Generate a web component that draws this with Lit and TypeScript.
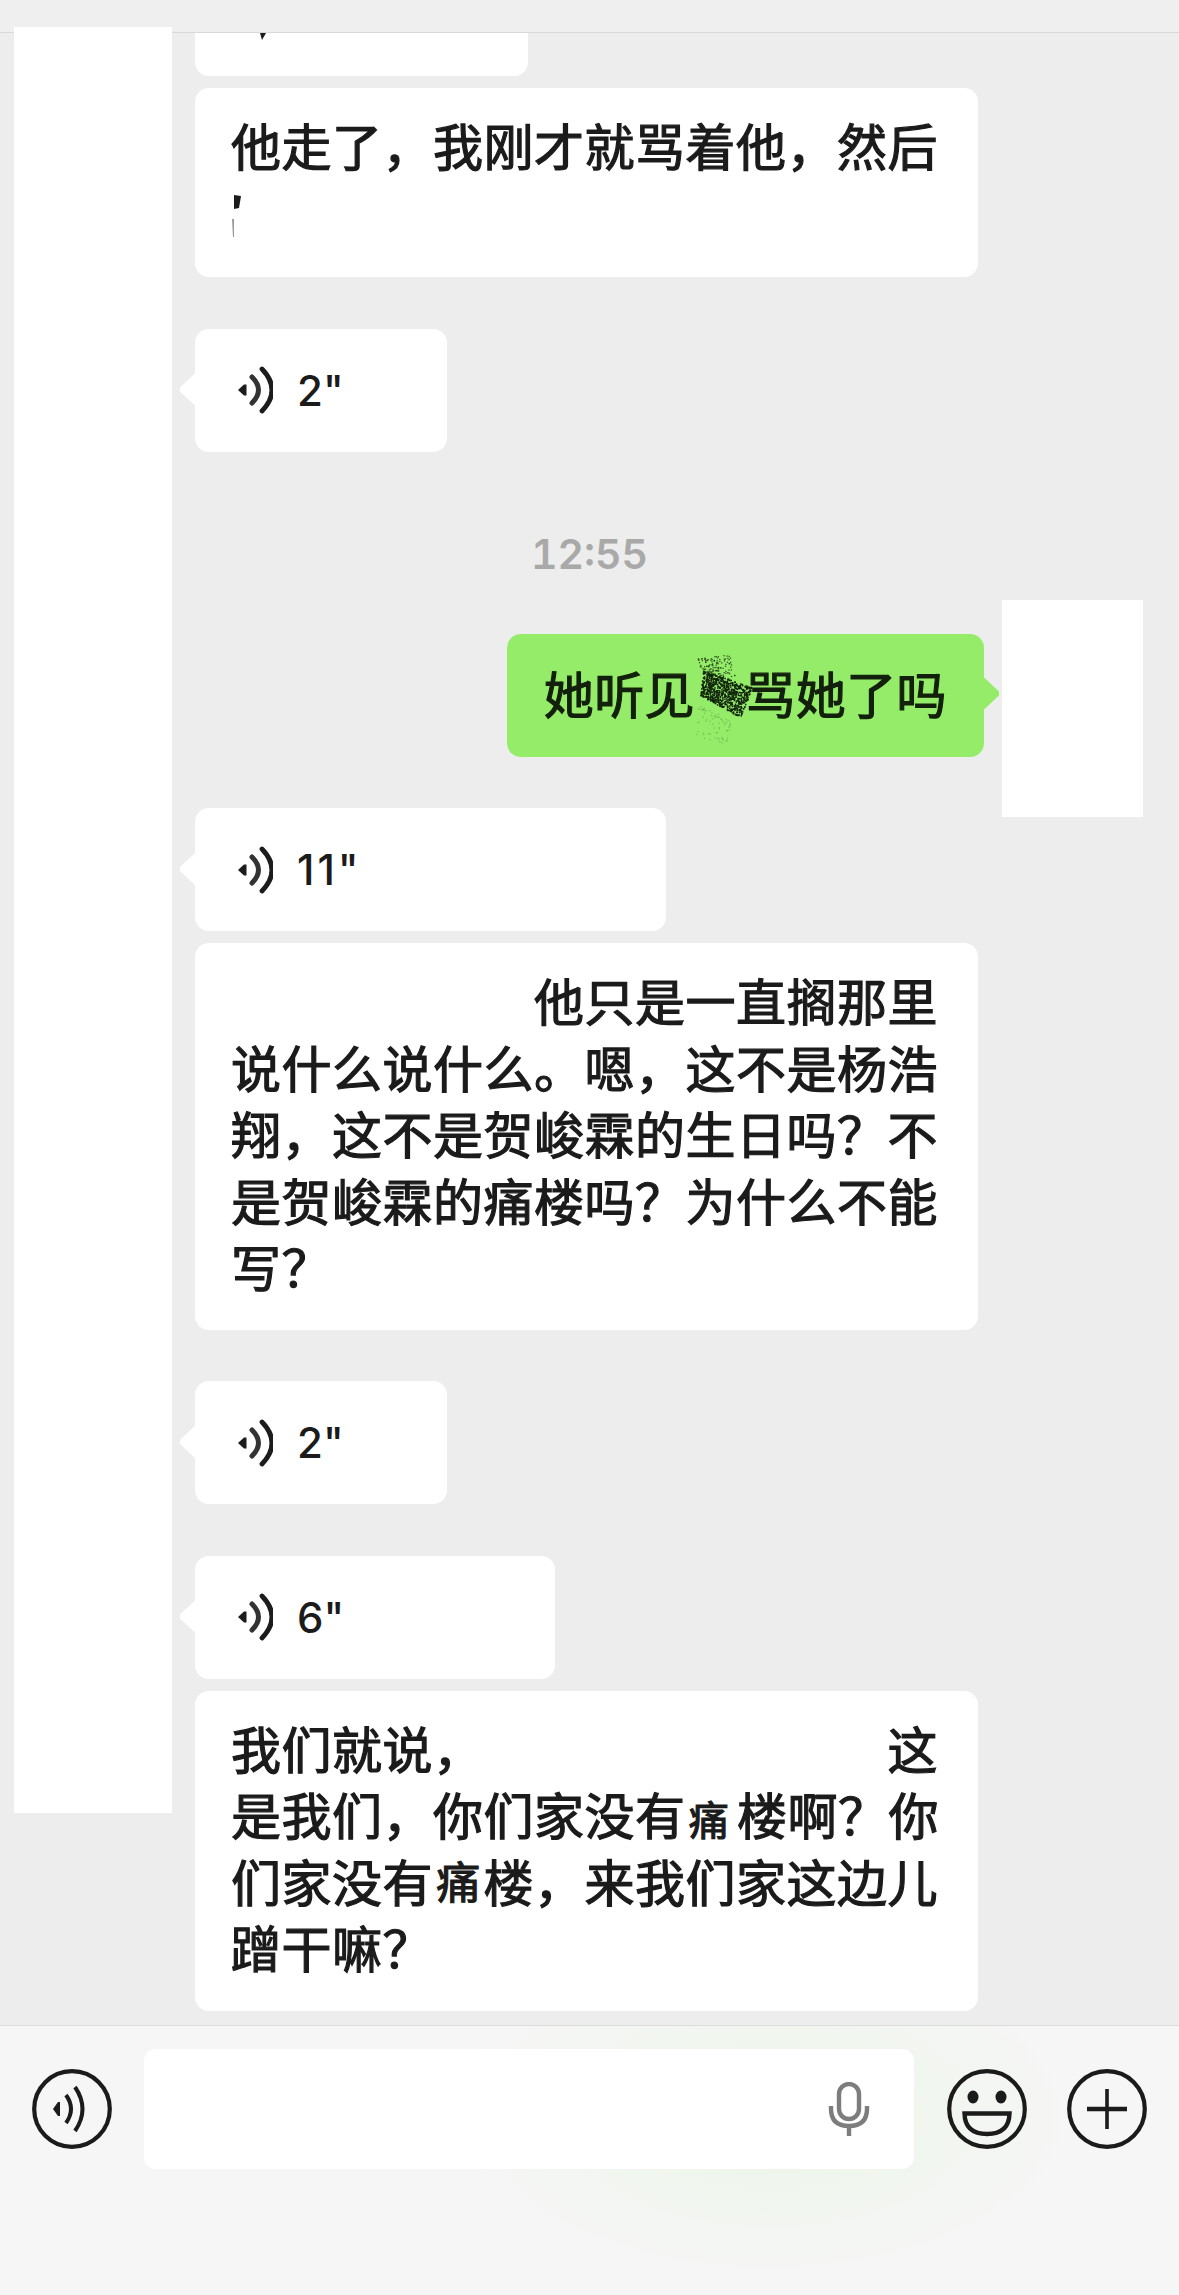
import { LitElement, html, css, svg } from "lit";
import { customElement } from "lit/decorators.js";

// small seeded generator so the scribble stays the same between runs
function makeRandom(seed: number) {
  let s = seed;
  return () => {
    s = (s * 1664525 + 1013904223) % 4294967296;
    return s / 4294967296;
  };
}

type Pt = [number, number];

function quadDots(rand: () => number, q: Pt[], count: number) {
  const out: Pt[] = [];
  for (let i = 0; i < count; i++) {
    const u = rand();
    const v = rand();
    const ax = q[0][0] + (q[1][0] - q[0][0]) * u;
    const ay = q[0][1] + (q[1][1] - q[0][1]) * u;
    const bx = q[3][0] + (q[2][0] - q[3][0]) * u;
    const by = q[3][1] + (q[2][1] - q[3][1]) * u;
    out.push([ax + (bx - ax) * v, ay + (by - ay) * v]);
  }
  return out;
}

const rand = makeRandom(47);
const denseDots = quadDots(rand, [[13, 18], [62, 35], [50, 65], [10, 43]], 760);
const topDots = quadDots(rand, [[7, 6], [40, 2], [46, 24], [10, 24]], 130);
const lowDots = quadDots(rand, [[8, 52], [40, 66], [40, 92], [6, 86]], 70);

const voiceBubbles = { short: 252, six: 360, long: 471 };

const voiceGlyph = html`<svg class="wave" viewBox="0 0 36 48">
  <path d="M1 24 L7 18.5 L9.5 18.5 L9.5 29.5 L7 29.5Z" fill="#1c1c1c"></path>
  <path d="M15 11 Q28 24 15 37" fill="none" stroke="#333" stroke-width="5" stroke-linecap="round"></path>
  <path d="M25 3 Q45 24 25 45" fill="none" stroke="#1c1c1c" stroke-width="4.8" stroke-linecap="round"></path>
</svg>`;

@customElement("app-root")
export class AppRoot extends LitElement {
  static styles = css`
    :host {
      display: flex;
      flex-direction: column;
      position: relative;
      width: 1179px;
      height: 2295px;
      overflow: hidden;
      background: #ededed;
      color: #1b1b1b;
      font-family: "Noto Sans CJK SC", "Liberation Sans", sans-serif;
    }

    .top {
      height: 32px;
      flex: none;
      background: #efefef;
      border-bottom: 1px solid #d9d9d9;
    }

    .chat {
      flex: 1;
      min-height: 0;
      display: flex;
      flex-direction: column;
      align-items: flex-start;
      padding: 0 195px;
      overflow: hidden;
    }

    .bubble {
      position: relative;
      box-sizing: border-box;
      background: #fff;
      border-radius: 14px;
      flex: none;
    }

    .cut {
      width: 333px;
      height: 43px;
      border-radius: 0 0 14px 14px;
    }

    .cut svg {
      position: absolute;
      left: 62px;
      top: 0;
      width: 10px;
      height: 7px;
    }

    .text {
      width: 783px;
      padding: 23px 40px 31px 36px;
      font-size: 50px;
      line-height: 66.5px;
      letter-spacing: 0.5px;
      -webkit-text-stroke: 1.2px currentColor;
    }

    .line {
      white-space: nowrap;
      height: 66.5px;
    }

    .right {
      text-align: right;
    }

    .spread {
      display: flex;
      justify-content: space-between;
    }

    .scrap-line {
      display: flex;
      align-items: flex-start;
      height: 68.5px;
      padding-top: 17px;
      box-sizing: border-box;
    }

    .scrap {
      width: 14px;
      height: 46px;
    }

    .pasted {
      display: inline-block;
      width: 50.5px;
      text-align: center;
      letter-spacing: 0;
    }

    .pasted-a {
      font-size: 40px;
      margin-right: 3px;
      margin-left: -2px;
    }

    .pasted-b {
      font-size: 44px;
      position: relative;
      top: -3px;
    }

    .near {
      margin-top: 12px;
    }

    .far {
      margin-top: 51.5px;
    }

    .voice {
      height: 123px;
      display: flex;
      align-items: center;
      padding-left: 42px;
      gap: 24px;
      font-family: Inter, "Liberation Sans", sans-serif;
      font-size: 42px;
      font-weight: 500;
    }

    .wide {
      letter-spacing: 3px;
    }

    .voice::before {
      content: "";
      position: absolute;
      left: -15px;
      top: 44px;
      width: 16px;
      height: 34px;
      background: #fff;
      clip-path: polygon(0 44%, 0 56%, 100% 100%, 100% 0);
    }

    .wave {
      width: 36px;
      height: 48px;
      flex: none;
    }

    .time {
      align-self: stretch;
      margin: 76px 0 54px;
      text-align: center;
      font-family: Inter, "Liberation Sans", sans-serif;
      font-size: 41px;
      line-height: 52px;
      font-weight: 600;
      font-variant-numeric: tabular-nums;
      color: #a9a9a9;
    }

    .mine {
      align-self: flex-end;
      background: #95ec69;
      color: #12200c;
      padding: 25px 37px 31.5px;
      font-size: 50px;
      line-height: 66.5px;
      letter-spacing: 0.4px;
      -webkit-text-stroke: 1.2px currentColor;
      white-space: nowrap;
      display: flex;
    }

    .mine::after {
      content: "";
      position: absolute;
      right: -15px;
      top: 43px;
      width: 16px;
      height: 34px;
      background: #95ec69;
      clip-path: polygon(100% 44%, 100% 56%, 0 100%, 0 0);
    }

    .hole {
      position: relative;
      width: 50.4px;
      height: 66px;
      flex: none;
    }

    .blot {
      position: absolute;
      left: -5px;
      top: -7px;
      width: 70px;
      height: 95px;
      -webkit-text-stroke: 0;
    }

    .composer {
      flex: none;
      height: 270px;
      box-sizing: border-box;
      border-top: 1px solid #dcdcdc;
      display: flex;
      align-items: flex-start;
      padding: 23px 0 0 32px;
      background:
        radial-gradient(ellipse 320px 170px at 770px 90px, #ecf5e8 0%, rgba(236, 245, 232, 0) 100%),
        #f6f6f6;
    }

    .round {
      width: 80px;
      height: 80px;
      flex: none;
      margin-top: 20px;
    }

    .field {
      width: 770px;
      height: 120px;
      flex: none;
      box-sizing: border-box;
      margin: 0 33px 0 32px;
      background: #fff;
      border-radius: 12px;
      display: flex;
      justify-content: flex-end;
      align-items: center;
      padding-right: 44px;
    }

    .mic {
      width: 42px;
      height: 54px;
    }

    .plus {
      margin-left: 40px;
    }

    .mask {
      position: absolute;
      background: #fff;
    }

    .mask-left {
      left: 14px;
      top: 27px;
      width: 158px;
      height: 1786px;
    }

    .mask-right {
      left: 1002px;
      top: 600px;
      width: 141px;
      height: 217px;
    }
  `;

  renderVoice(label: string, width: number, gap: string) {
    return html`<div class="bubble voice ${gap}" style="width:${width}px">
      ${voiceGlyph}<span class=${label.length > 2 ? "wide" : ""}>${label}</span>
    </div>`;
  }

  renderBlot() {
    return html`<svg class="blot" viewBox="0 0 70 95">
      ${lowDots.map(
        ([x, y]) => svg`<rect x=${x} y=${y} width="1.2" height="1.2" fill="#3f8030" opacity="0.4"></rect>`
      )}
      ${topDots.map(
        ([x, y]) => svg`<rect x=${x} y=${y} width="1.3" height="1.3" fill="#1c3a14" opacity="0.8"></rect>`
      )}
      ${denseDots.map(
        ([x, y]) => svg`<rect x=${x} y=${y} width="1.5" height="1.5" fill="#11240c"></rect>`
      )}
    </svg>`;
  }

  render() {
    return html`
      <div class="top"></div>

      <div class="chat">
        <div class="bubble cut">
          <svg viewBox="0 0 10 7"><path d="M3 0H9L5 7Z" fill="#1b1b1b"></path></svg>
        </div>
        <div class="bubble text near">
          <div class="line">他走了，我刚才就骂着他，然后</div>
          <div class="line scrap-line">
            <svg class="scrap" viewBox="0 0 14 46">
              <path d="M3 0L10 1L8 13L3 14Z" fill="#1b1b1b"></path>
              <path d="M1 24H3V42H2Z" fill="#9a9a9a"></path>
            </svg>
          </div>
        </div>

        ${this.renderVoice('2"', voiceBubbles.short, "far")}

        <div class="time">12:55</div>

        <div class="bubble mine">
          <span>她听见</span>
          <span class="hole">${this.renderBlot()}</span>
          <span>骂她了吗</span>
        </div>

        ${this.renderVoice('11"', voiceBubbles.long, "far")}

        <div class="bubble text near">
          <div class="line right">他只是一直搁那里</div>
          <div class="line">说什么说什么。嗯，这不是杨浩</div>
          <div class="line">翔，这不是贺峻霖的生日吗？不</div>
          <div class="line">是贺峻霖的痛楼吗？为什么不能</div>
          <div class="line">写？</div>
        </div>

        ${this.renderVoice('2"', voiceBubbles.short, "far")}
        ${this.renderVoice('6"', voiceBubbles.six, "far")}

        <div class="bubble text near">
          <div class="line spread"><span>我们就说，</span><span>这</span></div>
          <div class="line">是我们，你们家没有<span class="pasted pasted-a">痛</span>楼啊？你</div>
          <div class="line">们家没有<span class="pasted pasted-b">痛</span>楼，来我们家这边儿</div>
          <div class="line">蹭干嘛？</div>
        </div>
      </div>

      <div class="composer">
        <svg class="round" viewBox="0 0 80 80" fill="none" stroke="#1b1b1b">
          <circle cx="40" cy="40" r="37.8" stroke-width="4.2"></circle>
          <path d="M21 40L26 33H28V47H26Z" fill="#1b1b1b" stroke="none"></path>
          <path d="M34 26Q44 40 34 54" stroke-width="4"></path>
          <path d="M43 18Q58 40 43 62" stroke-width="4"></path>
        </svg>

        <div class="field">
          <svg class="mic" viewBox="0 0 42 54" fill="none" stroke="#7d7d7d" stroke-width="4.4">
            <rect x="11" y="2" width="20" height="35" rx="10"></rect>
            <path d="M3 24V27Q3 44 21 44Q39 44 39 27V24"></path>
            <path d="M21 44V54"></path>
          </svg>
        </div>

        <svg class="round" viewBox="0 0 80 80" fill="none" stroke="#1b1b1b">
          <circle cx="40" cy="40" r="37.8" stroke-width="4.2"></circle>
          <ellipse cx="26" cy="28" rx="5.5" ry="6.5" fill="#1b1b1b" stroke="none"></ellipse>
          <ellipse cx="54" cy="28" rx="5.5" ry="6.5" fill="#1b1b1b" stroke="none"></ellipse>
          <path d="M17.5 44.5H62.5Q62 65 40 65Q18 65 17.5 44.5Z" stroke-width="4.4"></path>
        </svg>

        <svg class="round plus" viewBox="0 0 80 80" fill="none" stroke="#1b1b1b">
          <circle cx="40" cy="40" r="37.8" stroke-width="4.2"></circle>
          <path d="M20 40H60" stroke-width="4.6"></path>
          <path d="M40 20V60" stroke-width="3.6"></path>
        </svg>
      </div>

      <div class="mask mask-left"></div>
      <div class="mask mask-right"></div>
    `;
  }
}
